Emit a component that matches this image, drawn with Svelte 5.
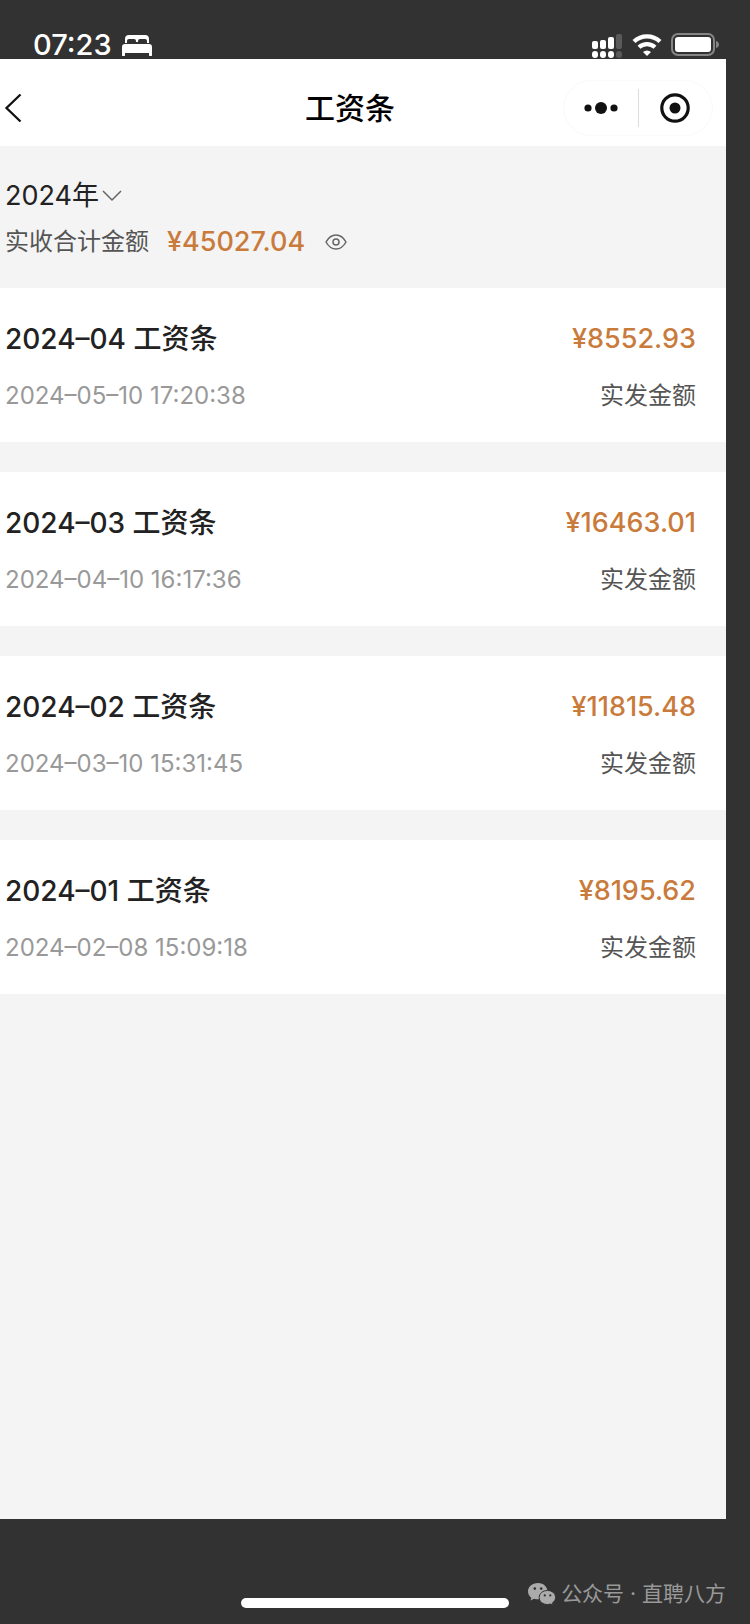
<script>
  let hidden = $state(false);
  let year = $state("2024");

  const total = "45027.04";

  const slips = [
    { month: "2024–04", time: "2024–05–10 17:20:38", amount: "8552.93" },
    { month: "2024–03", time: "2024–04–10 16:17:36", amount: "16463.01" },
    { month: "2024–02", time: "2024–03–10 15:31:45", amount: "11815.48" },
    { month: "2024–01", time: "2024–02–08 15:09:18", amount: "8195.62" }
  ];

  const money = value => (hidden ? "****" : `¥${value}`);
</script>

<div class="phone">
  <div class="status">
    <div class="clock">
      <span>07:23</span>
      <svg width="30" height="21" viewBox="0 0 30 21" fill="#fff">
        <path d="M3 8V4a4 4 0 0 1 4-4h16a4 4 0 0 1 4 4v4h-2V6a2 2 0 0 0-2-2h-5a2 2 0 0 0-2 2v1h-2V6a2 2 0 0 0-2-2H7a2 2 0 0 0-2 2v2z" />
        <path d="M0 20v-8a3 3 0 0 1 3-3h24a3 3 0 0 1 3 3v8a1 1 0 0 1-3 0v-2H3v2a1 1 0 0 1-3 0z" />
      </svg>
    </div>
    <div class="signals">
      <svg width="31" height="25" viewBox="0 0 31 25" fill="#fff">
        <rect x="0" y="8" width="6" height="8" rx="2" />
        <rect x="8" y="7" width="6" height="9" rx="2" />
        <rect x="16" y="4" width="6" height="12" rx="2" />
        <rect x="24" y="1" width="6" height="15" rx="2" fill="#5a5a5a" />
        <rect x="0" y="18" width="6" height="7" rx="3" />
        <rect x="8" y="18" width="6" height="7" rx="3" />
        <rect x="16" y="18" width="6" height="7" rx="3" />
        <rect x="24" y="18" width="6" height="7" rx="3" fill="#5a5a5a" />
      </svg>
      <svg width="30" height="22" viewBox="0 0 30 22">
        <path d="M2 7.500a19 19 0 0 1 26 0" fill="none" stroke="#fff" stroke-width="4.400" />
        <path d="M7 13.200a11.800 11.800 0 0 1 16 0" fill="none" stroke="#fff" stroke-width="4.200" />
        <path d="M15 22l-4-4a5.800 5.800 0 0 1 8 0z" fill="#fff" />
      </svg>
      <svg width="49" height="24" viewBox="0 0 49 24">
        <rect x="1" y="1" width="42" height="21" rx="6" fill="none" stroke="#858585" stroke-width="2" />
        <rect x="4" y="4" width="36" height="15" rx="3" fill="#fff" />
        <path d="M45 8c4 1 4 6 0 7z" fill="#858585" />
      </svg>
    </div>
  </div>

  <main>
    <header>
      <button class="back" aria-label="返回">
        <svg width="18" height="30" viewBox="0 0 18 30" fill="none" stroke="#111" stroke-width="2.3">
          <path d="M16.500 1.500L2.500 15l14 13.500" />
        </svg>
      </button>
      <h1>工资条</h1>
      <div class="capsule">
        <button aria-label="更多">
          <svg width="34" height="14" viewBox="0 0 34 14" fill="#111">
            <circle cx="4" cy="7" r="3.6" />
            <circle cx="17" cy="7" r="6" />
            <circle cx="30" cy="7" r="3.6" />
          </svg>
        </button>
        <button aria-label="关闭">
          <svg width="30" height="30" viewBox="0 0 30 30">
            <circle cx="15" cy="15" r="13.2" fill="none" stroke="#111" stroke-width="3.2" />
            <circle cx="15" cy="15" r="5.5" fill="#111" />
          </svg>
        </button>
      </div>
    </header>

    <section class="summary">
      <button class="year">
        {year}年
        <svg width="20" height="12" viewBox="0 0 20 12" fill="none" stroke="#666" stroke-width="1.5">
          <path d="M1 1l9 9 9-9" />
        </svg>
      </button>
      <div class="total">
        <span>实收合计金额</span>
        <strong>{money(total)}</strong>
        <button aria-label="显示或隐藏金额" onclick={() => (hidden = !hidden)}>
          <svg width="22" height="16" viewBox="0 0 22 16" fill="none" stroke="#666" stroke-width="1.5">
            <path d="M1 8C3.500 3.500 7 1 11 1s7.500 2.500 10 7c-2.500 4.500-6 7-10 7S3.500 12.500 1 8z" />
            <circle cx="11" cy="8" r="3" />
          </svg>
        </button>
      </div>
    </section>

    <ul>
      {#each slips as slip}
        <li>
          <div class="row">
            <h2>{slip.month} 工资条</h2>
            <strong>{money(slip.amount)}</strong>
          </div>
          <div class="row">
            <time>{slip.time}</time>
            <span>实发金额</span>
          </div>
        </li>
      {/each}
    </ul>
  </main>

  <footer>
    <div class="home"></div>
    <div class="account">
      <svg width="28" height="22" viewBox="0 0 28 22">
        <path d="M10 0C4 0 0 4 0 8.500c0 2.500 1.300 4.700 3.300 6.200L2.500 17.500l3.600-1.800c1.200.4 2.500.6 3.900.6 6 0 9.500-3.700 9.500-7.800S16 0 10 0z" fill="#ababab" />
        <path d="M19.500 7.500c-4.800 0-8.300 3-8.300 7s3.500 7 8.300 7c1.100 0 2.100-.2 3-.5l2.700 1-.7-2.200c1.900-1.300 3.100-3.200 3.100-5.300 0-4-3.500-7-8.100-7z" fill="#ababab" stroke="#323232" />
        <g fill="#323232">
          <circle cx="6.800" cy="5.600" r="1.300" />
          <circle cx="13.200" cy="5.600" r="1.300" />
          <circle cx="16.800" cy="12.400" r="1.100" />
          <circle cx="22.300" cy="12.400" r="1.100" />
        </g>
      </svg>
      <span>公众号 · 直聘八方</span>
    </div>
  </footer>
</div>

<style>
  :global(body) {
    margin: 0;
    background: #323232;
  }

  .phone {
    min-height: 100vh;
    display: flex;
    flex-direction: column;
    font-family: Inter, "Noto Sans CJK SC", sans-serif;
    line-height: 40px;
    color: #222;
  }

  svg {
    display: block;
    flex: none;
  }

  button {
    border: 0;
    padding: 0;
    background: none;
    font: inherit;
    color: inherit;
    cursor: pointer;
  }

  h1,
  h2,
  ul {
    margin: 0;
    padding: 0;
    list-style: none;
  }

  .status {
    height: 59px;
    box-sizing: border-box;
    padding: 30px 30px 0 33px;
    display: flex;
    justify-content: space-between;
    color: #fff;
  }

  .clock,
  .signals {
    display: flex;
    align-items: center;
    height: 30px;
  }

  .clock {
    gap: 10px;
    font-size: 29px;
    font-weight: 500;
  }

  .signals {
    gap: 9px;
  }

  main {
    flex: 1;
    margin-right: 24px;
    background: #f4f4f4;
  }

  header {
    height: 87px;
    display: flex;
    align-items: center;
    background: #fff;
  }

  .back {
    width: 137px;
    height: 60px;
    padding: 10px 4px 0;
  }

  h1 {
    flex: 1;
    padding-top: 10px;
    text-align: center;
    font-size: 30px;
    font-weight: 500;
    color: #000;
  }

  .capsule {
    width: 150px;
    height: 56px;
    margin: 10px 13px 0 0;
    box-sizing: border-box;
    display: flex;
    align-items: center;
    border: 1px solid #fafafa;
    border-radius: 28px;
  }

  .capsule button {
    flex: 1;
    height: 38px;
    display: flex;
    align-items: center;
    justify-content: center;
  }

  .capsule button + button {
    border-left: 1px solid #ddd;
  }

  .summary {
    height: 142px;
    box-sizing: border-box;
    padding: 30px 5px 0;
  }

  .year {
    display: flex;
    align-items: center;
    gap: 3px;
    font-size: 27px;
    line-height: 40px;
  }

  .total {
    display: flex;
    align-items: center;
    height: 40px;
    margin-top: 6px;
    font-size: 24px;
    color: #555;
  }

  strong {
    font-size: 27px;
    font-weight: 500;
    color: #c97b3c;
  }

  .total strong {
    margin: 0 20px 0 18px;
  }

  li {
    padding: 31px 30px 26px 5px;
    background: #fff;
  }

  li + li {
    margin-top: 30px;
  }

  .row {
    display: flex;
    align-items: center;
    justify-content: space-between;
    height: 40px;
  }

  .row + .row {
    margin-top: 17px;
  }

  h2 {
    font-size: 28px;
    font-weight: 500;
  }

  time,
  .row span {
    font-size: 24px;
    color: #999;
  }

  .row span {
    color: #555;
  }

  footer {
    height: 105px;
    display: grid;
    grid-template-columns: 1fr 268px 1fr;
  }

  .home {
    grid-column: 2;
    height: 10px;
    margin-top: 79px;
    border-radius: 5px;
    background: #fff;
  }

  .account {
    display: flex;
    align-items: center;
    justify-content: flex-end;
    gap: 5px;
    height: 30px;
    margin-top: 60px;
    padding-right: 24px;
    font-size: 21px;
    white-space: nowrap;
    color: #999;
  }
</style>
